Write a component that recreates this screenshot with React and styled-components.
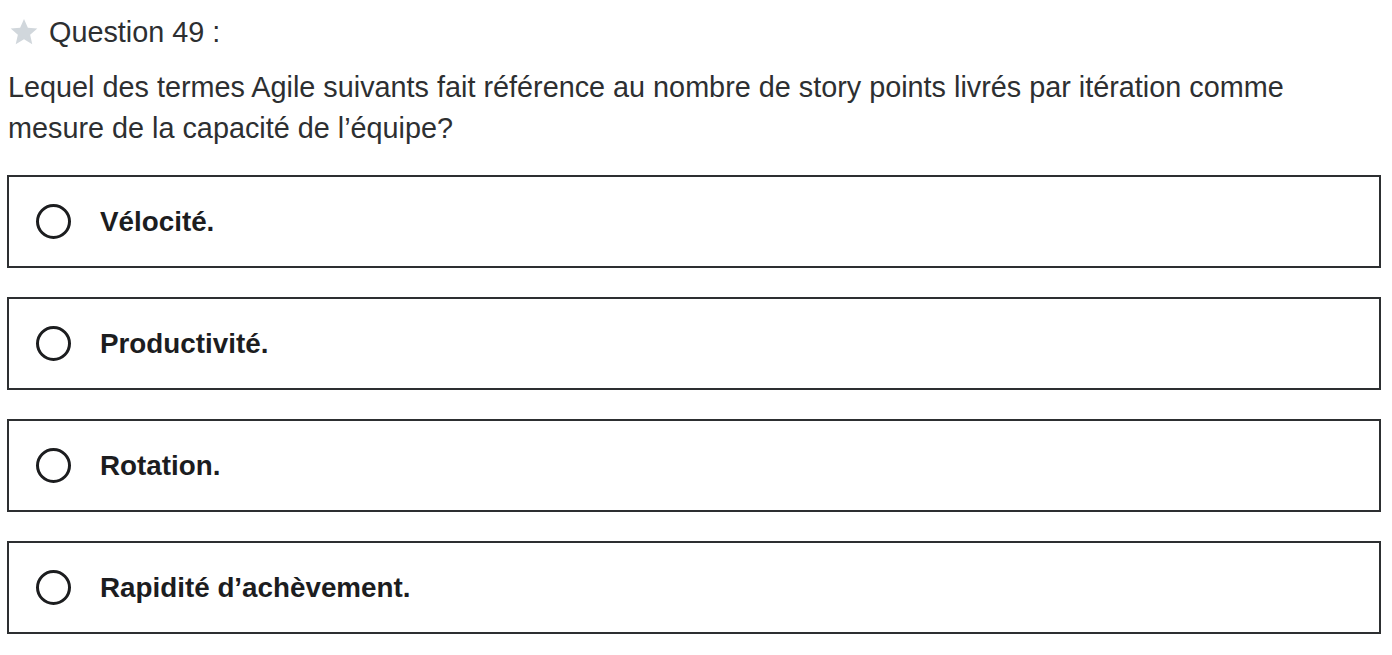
import React from "react";
import styled, { createGlobalStyle } from "styled-components";

const GlobalStyle = createGlobalStyle`
  html, body {
    margin: 0;
    padding: 0;
    background: #fff;
  }
  body {
    font-family: "Liberation Sans", Arial, sans-serif;
    color: #2d2f31;
  }
`;

const Page = styled.div`
  width: 1392px;
  height: 655px;
  box-sizing: border-box;
  padding: 12px 11px 0 7px;
  overflow: hidden;
`;

const Header = styled.div`
  display: flex;
  align-items: center;
  gap: 9px;
  height: 40px;
  padding-left: 1px;
  font-size: 28.8px;
  color: #2d2f31;
`;

const Prompt = styled.p`
  margin: 15px 0 0 1px;
  max-width: 1310px;
  font-size: 28.8px;
  line-height: 41px;
  color: #2d2f31;
`;

const Options = styled.div`
  display: flex;
  flex-direction: column;
  gap: 29px;
  margin-top: 26px;
`;

const Option = styled.label`
  display: flex;
  align-items: center;
  height: 93px;
  box-sizing: border-box;
  border: 2px solid #2d2f31;
  padding-left: 27px;
  cursor: pointer;
  background: #fff;
`;

const Radio = styled.span`
  width: 35px;
  height: 35px;
  box-sizing: border-box;
  border: 3px solid #1c1d1f;
  border-radius: 50%;
  flex-shrink: 0;
`;

const OptionText = styled.span`
  margin-left: 29px;
  font-family: "Liberation Sans", Arial, sans-serif;
  font-weight: 700;
  font-size: 27.8px;
  color: #1c1d1f;
`;

const Star = () => (
  <svg width="32" height="32" viewBox="0 0 24 24">
    <path
      d="M12 2.2l2.9 6.6 7.1.6-5.4 4.7 1.6 7-6.2-3.7-6.2 3.7 1.6-7L2 9.4l7.1-.6z"
      fill="#d1d7dc"
    />
  </svg>
);

const answers = [
  "Vélocité.",
  "Productivité.",
  "Rotation.",
  "Rapidité d’achèvement.",
];

export default function App() {
  return (
    <Page>
      <GlobalStyle />
      <Header>
        <Star />
        <span>Question 49 :</span>
      </Header>
      <Prompt>
        Lequel des termes Agile suivants fait référence au nombre de story
        points livrés par itération comme mesure de la capacité de l’équipe?
      </Prompt>
      <Options>
        {answers.map((a) => (
          <Option key={a}>
            <Radio />
            <OptionText>{a}</OptionText>
          </Option>
        ))}
      </Options>
    </Page>
  );
}
